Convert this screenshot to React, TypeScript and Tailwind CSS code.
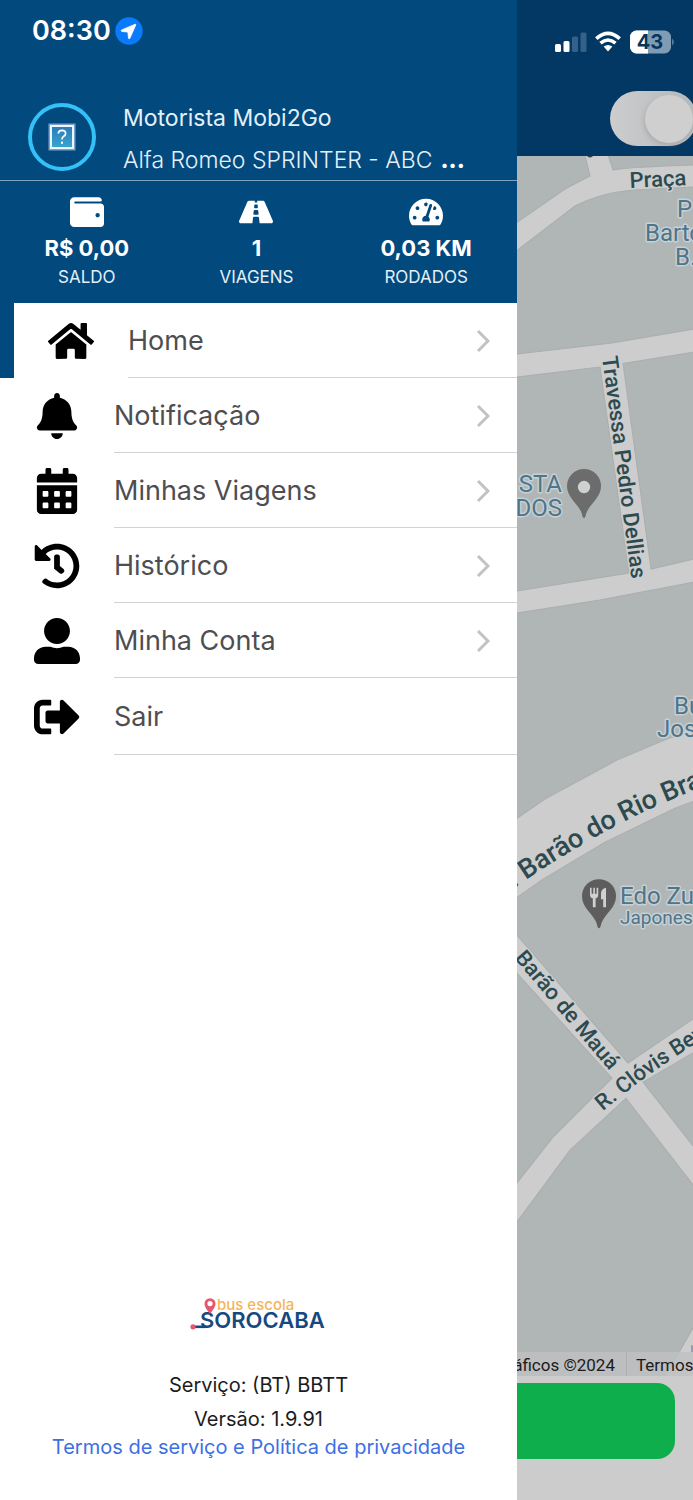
import type { ComponentType } from "react";
import {
  FaBell,
  FaCalendarAlt,
  FaHistory,
  FaHome,
  FaRoad,
  FaSignOutAlt,
  FaTachometerAlt,
  FaUserAlt,
  FaWallet,
} from "react-icons/fa";

type Icon = ComponentType<{ className?: string }>;

const stats: { icon: Icon; value: string; label: string }[] = [
  { icon: FaWallet, value: "R$ 0,00", label: "SALDO" },
  { icon: FaRoad, value: "1", label: "VIAGENS" },
  { icon: FaTachometerAlt, value: "0,03 KM", label: "RODADOS" },
];

const menu: { icon: Icon; label: string; active?: boolean; chevron: boolean }[] = [
  { icon: FaHome, label: "Home", active: true, chevron: true },
  { icon: FaBell, label: "Notificação", chevron: true },
  { icon: FaCalendarAlt, label: "Minhas Viagens", chevron: true },
  { icon: FaHistory, label: "Histórico", chevron: true },
  { icon: FaUserAlt, label: "Minha Conta", chevron: true },
  { icon: FaSignOutAlt, label: "Sair", chevron: false },
];

function LocationBadge() {
  return (
    <svg viewBox="0 0 28 28" className="size-7" aria-hidden="true">
      <circle cx="14" cy="14" r="13.7" fill="#0b7bfb" />
      <path
        d="M20.2 7.2 L6.6 13 Q5.4 13.9 6.9 14.4 L12.9 15.1 L13.5 21.2 Q14.1 22.6 14.9 21.3 L20.8 7.9 Q20.9 7.1 20.2 7.2Z"
        fill="#fff"
        stroke="#fff"
        strokeWidth="0.8"
        strokeLinejoin="round"
      />
    </svg>
  );
}

function Avatar() {
  return (
    <div className="flex size-[68px] shrink-0 items-center justify-center rounded-full border-4 border-[#33c1f7]">
      <svg viewBox="0 0 28 28" className="size-7" aria-hidden="true">
        <defs>
          <linearGradient id="missing" x1="0" y1="0" x2="0" y2="1">
            <stop offset="0" stopColor="#2c7cb8" />
            <stop offset="1" stopColor="#38a3cf" />
          </linearGradient>
        </defs>
        <rect x="0.5" y="0.5" width="27" height="27" fill="#7d9fd0" />
        <rect x="2" y="2" width="24" height="24" fill="#eef6fb" />
        <rect x="4" y="4" width="20" height="20" fill="url(#missing)" />
        <path
          d="M10.3 10.6 Q10.5 7.3 14 7.3 Q17.6 7.4 17.6 10.4 Q17.6 12.2 15.7 13.3 Q14 14.3 14 16.6"
          fill="none"
          stroke="#fff"
          strokeWidth="1.7"
        />
        <rect x="13" y="18.6" width="2" height="2.2" fill="#fff" />
      </svg>
    </div>
  );
}

function Chevron() {
  return (
    <svg viewBox="0 0 14 24" className="h-6 w-3.5" aria-hidden="true">
      <path d="M2 2 L12 12 L2 22" fill="none" stroke="#c2c2c4" strokeWidth="3" />
    </svg>
  );
}

function Logo() {
  return (
    <svg
      viewBox="0 0 138 36"
      className="h-9 w-[138px]"
      role="img"
      aria-label="bus escola Sorocaba"
      fontFamily="Inter, sans-serif"
    >
      <text x="28" y="14" fontSize="15" fontWeight="500" fill="#f5b458">
        bus escola
      </text>
      <text x="11" y="32" fontSize="22" fontWeight="600" fill="#17497f">
        SOROCABA
      </text>
      <path d="M4 30.800 H17" stroke="#17497f" strokeWidth="2.600" />
      <circle cx="4" cy="30.800" r="2.600" fill="#e8566d" />
      <path
        d="M21 18 C18 13.5 15.5 11 15.5 7.7 A5.5 5.5 0 0 1 26.5 7.7 C26.5 11 24 13.5 21 18Z M21 5 A2.6 2.6 0 1 0 21 10.2 A2.6 2.6 0 1 0 21 5Z"
        fill="#e8566d"
        fillRule="evenodd"
      />
    </svg>
  );
}

function PhoneStatus() {
  return (
    <svg viewBox="0 0 120 26" className="h-[26px] w-[120px]" role="img" aria-label="43">
      <rect x="0" y="15" width="6" height="8" rx="1.5" fill="#fff" />
      <rect x="8.5" y="12" width="6" height="11" rx="1.5" fill="#fff" />
      <rect x="17" y="7.5" width="6" height="15.5" rx="1.5" fill="#35608a" />
      <rect x="25.5" y="3.5" width="6" height="19.5" rx="1.5" fill="#35608a" />
      <g fill="none" stroke="#fff" strokeWidth="3.6">
        <path d="M41.3 9.6 Q53 -0.9 64.7 9.6" />
        <path d="M45.5 14.2 Q53 7.8 60.5 14.2" />
      </g>
      <path d="M48.6 17.6 Q53 14.2 57.4 17.6 L53 22.4Z" fill="#fff" />
      <clipPath id="battery">
        <rect x="75" y="1.5" width="41" height="23" rx="6.5" />
      </clipPath>
      <g clipPath="url(#battery)">
        <rect x="75" y="1" width="41" height="24" fill="#809cb4" />
        <rect x="75" y="1" width="18" height="24" fill="#fff" />
      </g>
      <path d="M117.3 9.5 Q120 13 117.3 16.5Z" fill="#809cb4" />
      <text
        x="95"
        y="20"
        textAnchor="middle"
        fontFamily="Inter, sans-serif"
        fontSize="20"
        fontWeight="700"
        fill="#04365f"
      >
        43
      </text>
    </svg>
  );
}

function Pin({ x, y, fill, food }: { x: number; y: number; fill: string; food?: boolean }) {
  return (
    <g transform={`translate(${x} ${y})`}>
      <path
        d="M0 49 C-1.6 49 -1.6 45.5 -3 42.5 C-7 34 -17 28 -17 17 A17 17 0 0 1 17 17 C17 28 7 34 3 42.5 C1.6 45.5 1.6 49 0 49Z"
        fill={fill}
      />
      {food ? (
        <g fill="#cfd0d0">
          <path d="M-9 8.5 h1.6 v6 h1.7 v-6 h1.6 v6 h1.7 v-6 h1.6 v7 q0 3 -2.6 3.6 V28 h-2.8 V19.1 q-2.8 -0.6 -2.8 -3.6Z" />
          <path d="M7 8.5 V28 H4.2 V20 H2 V14 Q2.2 9.5 7 8.5Z" />
        </g>
      ) : (
        <circle cx="0" cy="18" r="6.2" fill="#cfd0d0" />
      )}
    </g>
  );
}

function StreetMap() {
  return (
    <svg
      viewBox="517 156 176 1220"
      preserveAspectRatio="xMinYMin slice"
      className="absolute inset-0 size-full"
      fontFamily="Roboto, sans-serif"
    >
      <rect x="517" y="156" width="1000" height="1220" fill="#b0b5b6" />
      <g fill="#cdcdcd" stroke="#a9aeaf" strokeWidth="1">
        <path d="M516 223 L565 189 Q590 176 590 176 L585 155 H608 L613 170 Q630 167 694 165 V187 L633 190 Q600 193 575 206 L516 251Z" />
        <path d="M516 354 L612 343 L694 329 V352 L623 363.5 L651 569 L694 559 V582 L600 600 L516 613 V591 L629 573 L600 367 L516 377Z" />
        <path d="M516 819 L545 799 L617 760 L667 739 L694 730 V801 L675 808 L605 842 L543 879 L516 898Z" />
        <path d="M516 934 L628 1063 L694 1018 V1052 L643 1082 L694 1147 V1186 L626 1098 L570 1150 L516 1223 V1184 L553 1137 L612 1078 L516 972Z" />
        <path d="M694 1326 L665 1377 H694Z" />
      </g>
      <rect x="691" y="1345" width="3" height="7" fill="#9999b0" />
      <path d="M587 156 q3 3 6 0Z" fill="#2b474c" />

      <defs>
        <path id="travessa" d="M602 357 L633 590" />
        <path id="rio-branco" d="M514 888 L527 879 Q575 847 625 821 Q660 803 720 780" />
        <path id="maua" d="M514 958 L620 1083" />
        <path id="clovis" d="M603 1111 Q624 1093 650 1074 Q675 1056 720 1028" />
      </defs>
      <g
        fill="#2c4a4f"
        fontWeight="500"
        stroke="#cdcdcd"
        strokeWidth="3"
        strokeLinejoin="round"
        paintOrder="stroke"
      >
        <text x="630" y="188" fontSize="22" transform="rotate(-3 630 188)">
          Praça
        </text>
        <text fontSize="22">
          <textPath href="#travessa">Travessa Pedro Dellias</textPath>
        </text>
        <text fontSize="27">
          <textPath href="#rio-branco">. Barão do Rio Bra</textPath>
        </text>
        <text fontSize="22">
          <textPath href="#maua">Barão de Mauá</textPath>
        </text>
        <text fontSize="22">
          <textPath href="#clovis">R. Clóvis Bev</textPath>
        </text>
      </g>
      <g
        fill="#4e7589"
        fontSize="24"
        stroke="#c6d0d5"
        strokeWidth="3"
        strokeLinejoin="round"
        paintOrder="stroke"
      >
        <text x="677" y="217">P</text>
        <text x="645" y="241">Barto</text>
        <text x="675" y="265">B.</text>
        <text x="562" y="492" textAnchor="end">STA</text>
        <text x="562" y="516" textAnchor="end">DOS</text>
        <text x="674" y="714">Bu</text>
        <text x="657" y="737">Jos</text>
        <text x="620" y="904">Edo Zu</text>
        <text x="620" y="924" fontSize="19">Japones</text>
      </g>
      <Pin x={584} y={469} fill="#6c6c6c" />
      <Pin x={599} y={879} fill="#5d5d5d" food />
    </svg>
  );
}

function Drawer() {
  return (
    <aside className="flex w-[74.6%] shrink-0 flex-col bg-white">
      <header className="bg-[#02497e] text-white">
        <div className="flex h-[61px] items-center gap-1 pl-8">
          <time className="text-[27px] leading-8 font-semibold">08:30</time>
          <LocationBadge />
        </div>
        <div className="flex h-[120px] gap-[27px] border-b border-[#7fa3c1] pl-7">
          <div className="pt-[42px]">
            <Avatar />
          </div>
          <div className="min-w-0 pt-9 text-[#e3f0f8]">
            <h1 className="text-[23px] leading-[42px]">Motorista Mobi2Go</h1>
            <p className="flex gap-2 text-[23px] leading-[42px] font-light whitespace-nowrap">
              Alfa Romeo SPRINTER - ABC
              <span className="font-extrabold text-white">...</span>
            </p>
          </div>
        </div>
        <dl className="grid h-[122px] grid-cols-3 pt-3.5 pr-1.5 pl-0.5">
          {stats.map(({ icon: StatIcon, value, label }) => (
            <div key={label} className="flex flex-col items-center">
              <StatIcon className="size-[34px]" />
              <dd className="text-[22px] leading-[38px] font-bold">{value}</dd>
              <dt className="text-[17px] leading-5 text-[#e3f0f8]">{label}</dt>
            </div>
          ))}
        </dl>
      </header>

      <nav aria-label="Menu">
        <ul>
          {menu.map(({ icon: ItemIcon, label, active, chevron }) => (
            <li key={label} className={active ? "border-l-[14px] border-[#02497e]" : ""}>
              <a
                href="#"
                className={`flex items-center gap-[34px] pl-[34px] ${chevron ? "h-[75px]" : "h-[77px]"}`}
              >
                <ItemIcon className="size-[46px] shrink-0 text-black" />
                <span className="flex h-full flex-1 items-center justify-between border-b border-[#d3d3d5] pt-px pr-[27px] text-[27px] leading-9 text-[#4e4e50]">
                  {label}
                  {chevron && <Chevron />}
                </span>
              </a>
            </li>
          ))}
        </ul>
      </nav>

      <footer className="mt-auto flex flex-col items-center pb-[42px] text-[20px] text-[#1c1c1e]">
        <Logo />
        <p className="mt-9 leading-[34px]">Serviço: (BT) BBTT</p>
        <p className="leading-[34px]">Versão: 1.9.91</p>
        <a href="#" className="leading-[22px] text-[#3c6fe4]">
          Termos de serviço e Política de privacidade
        </a>
      </footer>
    </aside>
  );
}

export default function App() {
  return (
    <div className="flex min-h-screen overflow-hidden font-['Inter',sans-serif]">
      <Drawer />
      <main className="flex min-w-0 flex-1 flex-col overflow-hidden bg-[#cccccd]">
        <header className="flex h-[156px] flex-col items-end bg-[#023863] pt-[29px]">
          <div className="pr-[18px]">
            <PhoneStatus />
          </div>
          <input
            type="checkbox"
            defaultChecked
            aria-label="Disponível"
            className="-mr-1 mt-9 flex h-[55px] w-[87px] shrink-0 appearance-none items-center justify-end rounded-full bg-linear-to-r from-[#cbcdcf] to-[#b9b9ba] pr-1 before:size-12 before:rounded-full before:bg-[#cfcfcf] before:shadow-[-1px_2px_5px_#8886] before:content-['']"
          />
        </header>
        <section className="relative flex flex-1 items-end overflow-hidden" aria-label="Mapa">
          <StreetMap />
          <div className="relative flex h-6 w-full font-['Roboto',sans-serif] text-[17px] leading-[26px] text-[#1b1b1b]">
            <span className="flex w-[110px] shrink-0 justify-end border-r border-[#adb0b1] bg-[#bfc1c2]/80 pr-[11px] whitespace-nowrap">
              áficos ©2024
            </span>
            <a href="#" className="flex-1 bg-[#bfc1c2]/80 pl-[9px] whitespace-nowrap">
              Termos
            </a>
          </div>
        </section>
        <footer className="pt-[7px] pr-[18px] pb-[41px]">
          <button
            type="button"
            aria-label="Iniciar"
            className="block h-[76px] w-full rounded-r-[18px] bg-[#0fae4d]"
          />
        </footer>
      </main>
    </div>
  );
}
